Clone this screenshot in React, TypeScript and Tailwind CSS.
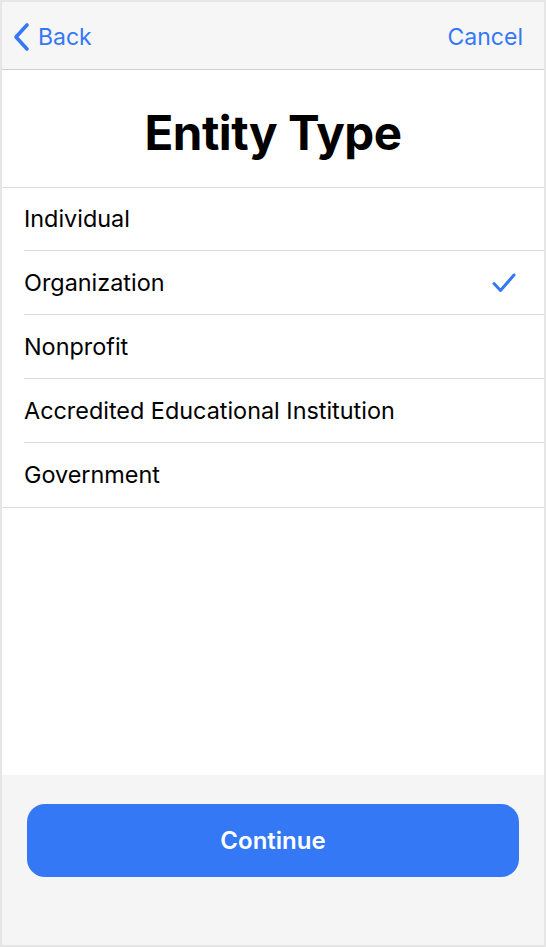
import React from "react";

const items = [
  "Individual",
  "Organization",
  "Nonprofit",
  "Accredited Educational Institution",
  "Government",
];

export default function App() {
  return (
    <div
      className="w-[546px] h-[947px] border-2 border-[#e6e6e6] flex flex-col bg-white overflow-hidden"
      style={{ fontFamily: "Inter, 'Noto Sans', sans-serif" }}
    >
      <div className="h-[68px] bg-[#f6f6f6] border-b border-[#cfcfcf] flex items-center justify-between pl-[10px] pr-[21px] pt-[3px] shrink-0">
        <div className="flex items-center gap-[6px] text-[#3478f6]">
          <svg width="20" height="32" viewBox="0 0 20 32" fill="none">
            <path d="M15 4 L4 16 L15 28" stroke="#3478f6" strokeWidth="3.6" strokeLinecap="round" strokeLinejoin="round" />
          </svg>
          <span className="text-[23px] leading-none">Back</span>
        </div>
        <span className="text-[23px] leading-none text-[#3478f6]">Cancel</span>
      </div>
      <div className="h-[118px] flex items-center justify-center border-b border-[#dcdcdc] shrink-0">
        <h1 className="text-[47.5px] font-bold text-black leading-none tracking-[-0.5px] mt-[9px]">Entity Type</h1>
      </div>
      <div className="flex flex-col">
        {items.map((it, i) => (
          <div key={it} className={i === items.length - 1 ? "border-b border-[#dcdcdc]" : ""}>
            <div
              className={
                (i === 0 ? "h-[63px] " : "h-[64px] ") +
                "flex items-center justify-between pr-[28px] ml-[22px] " +
                (i === items.length - 1 ? "" : "border-b border-[#dcdcdc]")
              }
            >
              <span className="text-[23.4px] text-black leading-none">{it}</span>
              {it === "Organization" && (
                <svg width="24" height="20" viewBox="0 0 24 20" fill="none">
                  <path d="M2 10.5 L8.5 17.5 L22 2" stroke="#3478f6" strokeWidth="3" strokeLinecap="round" strokeLinejoin="round" />
                </svg>
              )}
            </div>
          </div>
        ))}
      </div>
      <div className="flex-1" />
      <div className="h-[170px] bg-[#f5f5f5] shrink-0 px-[25px] pt-[29px]">
        <button className="w-full h-[73px] rounded-[18px] bg-[#3478f6] text-white text-[24px] font-semibold flex items-center justify-center">
          Continue
        </button>
      </div>
    </div>
  );
}
